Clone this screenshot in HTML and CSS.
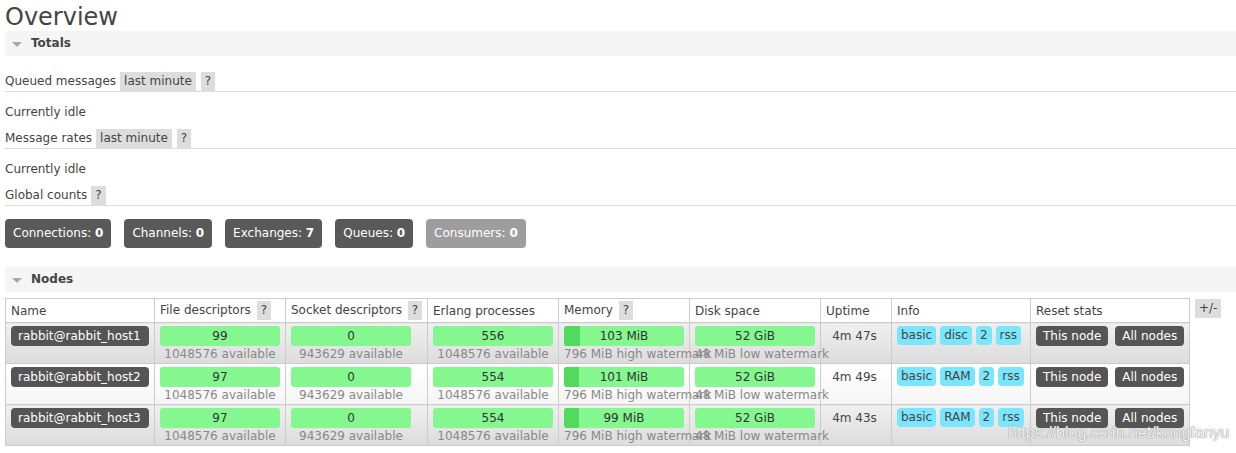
FILE: index.html
```html
<!DOCTYPE html>
<html>
<head>
<meta charset="utf-8">
<title>Overview</title>
<link rel="stylesheet" href="styles.css">
</head>
<body>
<div class="main">
  <h1 class="title">Overview</h1>

  <div class="section">
    <h2 class="section-h"><span class="tri"></span>Totals</h2>
    <div class="section-body">
      <h3 class="sub"><span class="sub-label">Queued messages</span><span class="tag">last minute</span><span class="help">?</span></h3>
      <p class="idle">Currently idle</p>
      <h3 class="sub"><span class="sub-label">Message rates</span><span class="tag">last minute</span><span class="help">?</span></h3>
      <p class="idle">Currently idle</p>
      <h3 class="sub"><span class="sub-label">Global counts</span><span class="help">?</span></h3>
      <div class="counts">
        <a class="count">Connections: <b>0</b></a>
        <a class="count">Channels: <b>0</b></a>
        <a class="count">Exchanges: <b>7</b></a>
        <a class="count">Queues: <b>0</b></a>
        <a class="count light">Consumers: <b>0</b></a>
      </div>
    </div>
  </div>

  <div class="section">
    <h2 class="section-h"><span class="tri"></span>Nodes</h2>
    <div class="nodes">
      <table class="list">
        <colgroup>
          <col class="c-name"><col class="c-fd"><col class="c-sd"><col class="c-ep"><col class="c-mem"><col class="c-disk"><col class="c-up"><col class="c-info"><col class="c-reset">
        </colgroup>
        <thead>
          <tr>
            <th>Name</th>
            <th>File descriptors <span class="help">?</span></th>
            <th>Socket descriptors <span class="help">?</span></th>
            <th>Erlang processes</th>
            <th>Memory <span class="help">?</span></th>
            <th>Disk space</th>
            <th>Uptime</th>
            <th>Info</th>
            <th>Reset stats</th>
          </tr>
        </thead>
        <tbody>
          <tr class="alt1">
            <td><span class="pill">rabbit@rabbit_host1</span></td>
            <td><div class="stat"><div class="bar">99</div><div class="avail">1048576 available</div></div></td>
            <td><div class="stat"><div class="bar">0</div><div class="avail">943629 available</div></div></td>
            <td><div class="stat"><div class="bar">556</div><div class="avail">1048576 available</div></div></td>
            <td><div class="stat"><div class="bar"><span class="fill" style="width:16px"></span><span class="bar-t">103 MiB</span></div><div class="avail">796 MiB high watermark</div></div></td>
            <td><div class="stat"><div class="bar">52 GiB</div><div class="avail">48 MiB low watermark</div></div></td>
            <td class="up">4m 47s</td>
            <td><div class="badges"><span class="badge">basic</span><span class="badge">disc</span><span class="badge">2</span><span class="badge">rss</span></div></td>
            <td><div class="resets"><span class="btn">This node</span><span class="btn">All nodes</span></div></td>
          </tr>
          <tr class="alt2">
            <td><span class="pill">rabbit@rabbit_host2</span></td>
            <td><div class="stat"><div class="bar">97</div><div class="avail">1048576 available</div></div></td>
            <td><div class="stat"><div class="bar">0</div><div class="avail">943629 available</div></div></td>
            <td><div class="stat"><div class="bar">554</div><div class="avail">1048576 available</div></div></td>
            <td><div class="stat"><div class="bar"><span class="fill" style="width:15px"></span><span class="bar-t">101 MiB</span></div><div class="avail">796 MiB high watermark</div></div></td>
            <td><div class="stat"><div class="bar">52 GiB</div><div class="avail">48 MiB low watermark</div></div></td>
            <td class="up">4m 49s</td>
            <td><div class="badges"><span class="badge">basic</span><span class="badge">RAM</span><span class="badge">2</span><span class="badge">rss</span></div></td>
            <td><div class="resets"><span class="btn">This node</span><span class="btn">All nodes</span></div></td>
          </tr>
          <tr class="alt1">
            <td><span class="pill">rabbit@rabbit_host3</span></td>
            <td><div class="stat"><div class="bar">97</div><div class="avail">1048576 available</div></div></td>
            <td><div class="stat"><div class="bar">0</div><div class="avail">943629 available</div></div></td>
            <td><div class="stat"><div class="bar">554</div><div class="avail">1048576 available</div></div></td>
            <td><div class="stat"><div class="bar"><span class="fill" style="width:15px"></span><span class="bar-t">99 MiB</span></div><div class="avail">796 MiB high watermark</div></div></td>
            <td><div class="stat"><div class="bar">52 GiB</div><div class="avail">48 MiB low watermark</div></div></td>
            <td class="up">4m 43s</td>
            <td><div class="badges"><span class="badge">basic</span><span class="badge">RAM</span><span class="badge">2</span><span class="badge">rss</span></div></td>
            <td><div class="resets"><span class="btn">This node</span><span class="btn">All nodes</span></div></td>
          </tr>
        </tbody>
      </table>
      <span class="toggle">+/-</span>
    </div>
  </div>
</div>
<div class="watermark">https://blog.csdn.net/kongfanyu</div>
</body>
</html>
```

FILE: styles.css
```css
html, body {
  margin: 0;
  padding: 0;
  background: #fff;
}
body {
  font-family: "DejaVu Sans", Verdana, sans-serif;
  font-size: 12px;
  color: #444;
  position: relative;
}
.main {
  padding: 4px 0 0 5px;
}
.title {
  margin: 0;
  font-size: 24px;
  font-weight: normal;
  line-height: 27px;
  color: #444;
}
.section-h {
  margin: 0;
  height: 25px;
  line-height: 25px;
  background: #f5f5f5;
  font-size: 12px;
  font-weight: bold;
  color: #444;
  display: flex;
  align-items: center;
}
.tri {
  width: 0;
  height: 0;
  border-left: 5px solid transparent;
  border-right: 5px solid transparent;
  border-top: 5px solid #a8a8a8;
  margin: 1px 9px 0 7px;
}
.section-body {
  padding-top: 16px;
}
.sub {
  margin: 0;
  font-size: 12px;
  font-weight: normal;
  display: flex;
  align-items: stretch;
  height: 19px;
  line-height: 19px;
  border-bottom: 1px solid #ddd;
}
.sub-label {
  margin-right: 4px;
}
.tag {
  background: #ddd;
  padding: 0 4px;
  margin-right: 5px;
}
.help {
  background: #ddd;
  padding: 0 4px;
  display: inline-block;
}
.idle {
  margin: 13px 0 10px;
  line-height: 14px;
}
.counts {
  display: flex;
  gap: 13px;
  margin-top: 13px;
}
.count {
  background: #595959;
  color: #fff;
  border-radius: 4px;
  height: 29px;
  line-height: 29px;
  padding: 0 8px;
  white-space: nowrap;
}
.count.light {
  background: #9d9d9d;
}
.section + .section {
  margin-top: 19px;
}
.nodes {
  margin-top: 6px;
  display: flex;
  align-items: flex-start;
  gap: 5px;
}
.list {
  border-collapse: collapse;
  table-layout: fixed;
  width: 1185px;
}
.c-name { width: 149px; }
.c-fd { width: 131px; }
.c-sd { width: 142px; }
.c-ep { width: 131px; }
.c-mem { width: 131px; }
.c-disk { width: 131px; }
.c-up { width: 71px; }
.c-info { width: 139px; }
.c-reset { width: 159px; }
.list th {
  border: 1px solid #ccc;
  background: #fff;
  font-weight: normal;
  text-align: left;
  padding: 0 5px;
  height: 23px;
  white-space: nowrap;
  overflow: visible;
}
.list th .help {
  line-height: 19px;
  margin-left: 2px;
}
.list td {
  border: 1px solid #ccc;
  padding: 3px 5px 2px;
  vertical-align: top;
  white-space: nowrap;
  overflow: visible;
}
.alt1 td {
  background: linear-gradient(to bottom, #f0f0f0, #dcdcdc);
}
.alt2 td {
  background: linear-gradient(to bottom, #ffffff, #f5f5f5);
}
.pill {
  display: block;
  background: #555;
  color: #fff;
  border-radius: 4px;
  height: 20px;
  line-height: 20px;
  padding: 0 7px;
}
.stat {
  width: 120px;
  text-align: center;
}
.bar {
  position: relative;
  background: #84f78f;
  border-radius: 3px;
  height: 20px;
  line-height: 20px;
  color: #333;
  overflow: hidden;
}
.fill {
  position: absolute;
  left: 0;
  top: 0;
  bottom: 0;
  background: #50da5e;
}
.bar-t {
  position: relative;
}
.avail {
  color: #888;
  line-height: 14px;
  padding-top: 1px;
}
.up {
  text-align: center;
  line-height: 20px;
}
.list td.up {
  padding-right: 8px;
}
.badges, .resets {
  display: flex;
  gap: 4px;
}
.resets {
  gap: 7px;
}
.badge {
  background: #7ae6fc;
  color: #444;
  border-radius: 4px;
  height: 19px;
  line-height: 19px;
  padding: 0 4px;
}
.btn {
  background: #555;
  color: #fff;
  border-radius: 4px;
  height: 20px;
  line-height: 20px;
  padding: 0 7px;
}
.toggle {
  background: #ddd;
  height: 19px;
  line-height: 19px;
  padding: 0 4px;
  margin-top: 1px;
  color: #444;
}
.watermark {
  position: absolute;
  left: 1008px;
  top: 424px;
  font-family: "Liberation Sans", Arial, sans-serif;
  font-size: 16px;
  color: rgba(255, 255, 255, 0.9);
  text-shadow: 0 0 1px #888, 0 0 1px #999;
  white-space: nowrap;
  pointer-events: none;
}
```
